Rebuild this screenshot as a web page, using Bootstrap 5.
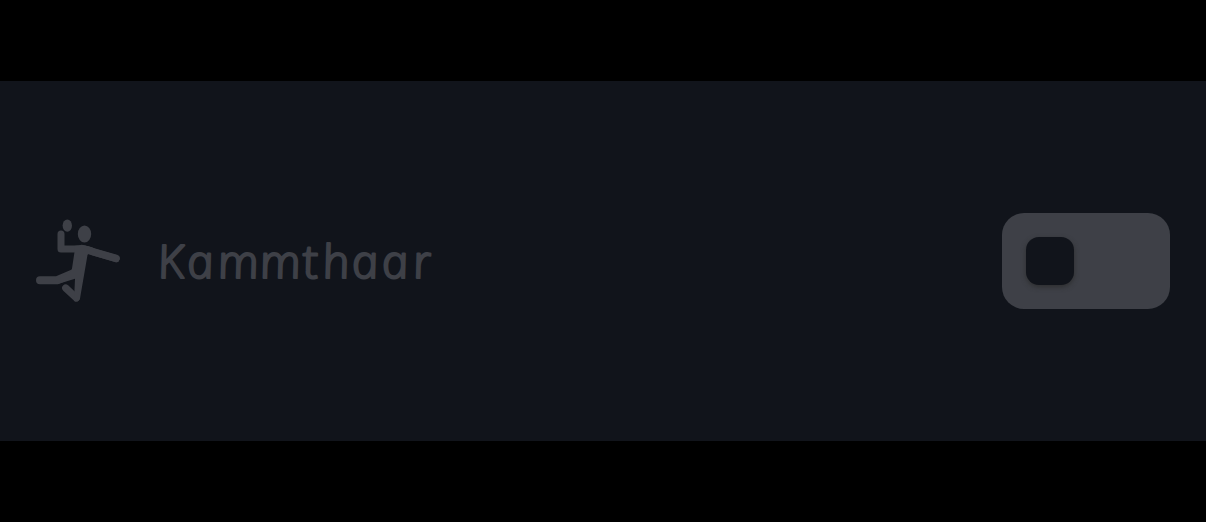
<!DOCTYPE html>
<html lang="en">
<head>
<meta charset="utf-8">
<meta name="viewport" content="width=device-width, initial-scale=1">
<title>Kammthaar</title>
<link href="https://cdn.jsdelivr.net/npm/bootstrap@5.3.0/dist/css/bootstrap.min.css" rel="stylesheet">
<style>
body{background:#000;padding-top:81px;overflow:hidden}
.setting{height:360px;background:#11141b;color:#3e4047;padding:0 36px}
.sport{width:84px;height:84px;margin-right:36px}
.title-art{width:284px;height:60px;overflow:visible}
.title-art text{font:italic 300 46px "Open Sans","Noto Sans",sans-serif;fill:currentColor;stroke:currentColor;stroke-width:2.2px;stroke-linejoin:round;stroke-linecap:round}
.toggle{width:168px;height:96px;border:0;padding:24px;border-radius:22px;background:#3e4047}
.knob{width:48px;height:48px;border-radius:13px;background:#11141b;box-shadow:0 2px 5px rgba(40,40,40,.75)}
</style>
</head>
<body>
<main class="setting d-flex align-items-center">
<svg class="sport flex-shrink-0" viewBox="36 219 84 84" fill="none" stroke="currentColor" stroke-linecap="round" stroke-linejoin="round" aria-hidden="true">
<ellipse cx="67.300" cy="225.600" rx="4.700" ry="6.200" fill="currentColor" stroke="none"/>
<ellipse cx="84.500" cy="234" rx="6.700" ry="8.600" fill="currentColor" stroke="none"/>
<path d="M61 234v14.900h19Q87 248.500 94 252.200L116.200 258.600" stroke-width="7"/>
<path d="M82 248.500L116 258.400" stroke-width="7.500"/>
<path d="M40 280.300h17L74 273" stroke-width="8"/>
<path d="M65.700 288L76.300 297.800" stroke-width="7.200"/>
<path d="M74 246Q82 244 92 247.500L87.500 255L80 298.500Q78.500 303 74 301L75 278.800L58 284L61 277L70.500 271.500Q71.700 270.500 72 268.500L74.500 252Z" fill="currentColor" stroke="none"/>
</svg>
<svg class="title-art flex-shrink-0" viewBox="156 231 284 60" role="img" aria-label="Kammthaar">
<text transform="translate(1.500 277.500) skewX(11) scale(1.04 1)" x="152.500 180.800 210.400 250.700 292 311 339.300 368.100 398.200" y="0">Kammthaar</text>
</svg>
<button class="toggle ms-auto d-flex flex-shrink-0" role="switch" aria-checked="false" aria-label="Kammthaar"><span class="knob d-block"></span></button>
</main>
<script src="https://cdn.jsdelivr.net/npm/bootstrap@5.3.0/dist/js/bootstrap.bundle.min.js"></script>
</body>
</html>
